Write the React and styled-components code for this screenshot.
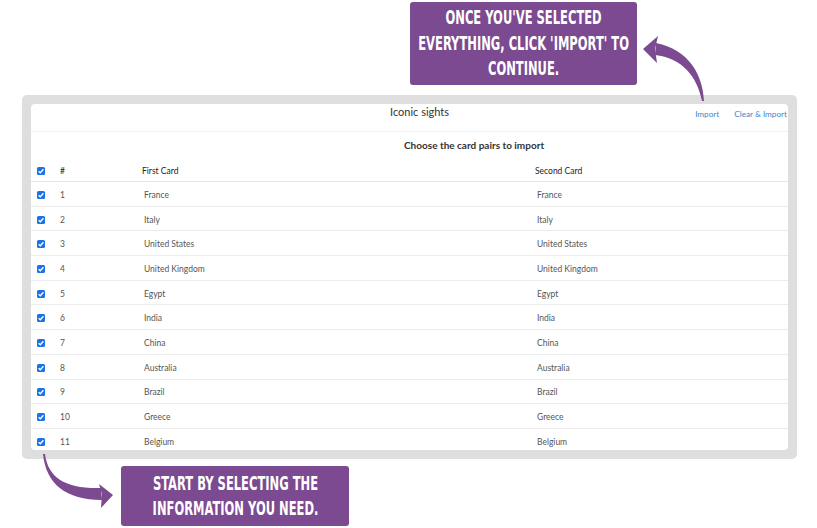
import React from "react";
import styled, { createGlobalStyle } from "styled-components";

const GlobalStyle = createGlobalStyle`
  html, body {
    margin: 0;
    padding: 0;
    background: #ffffff;
  }
  body {
    font-family: Lato, "Noto Sans", sans-serif;
  }
`;

const countries = [
  "France",
  "Italy",
  "United States",
  "United Kingdom",
  "Egypt",
  "India",
  "China",
  "Australia",
  "Brazil",
  "Greece",
  "Belgium",
];

function Checkbox() {
  return (
    <CheckBoxStyled>
      <svg width="8" height="8" viewBox="0 0 8 8">
        <path d="M1.6 4.2 L3.3 5.8 L6.4 2.3" fill="none" stroke="#fff" strokeWidth="1.3" />
      </svg>
    </CheckBoxStyled>
  );
}

// tapered curved arrows pointing from the panel to the callouts
function Arrows() {
  return (
    <ArrowLayer width="817" height="528" viewBox="0 0 817 528">
      <path
        d="M704 101 C 703 76 690 50 656 43 L 655 55 C 682 58 697 76 702 101 Z"
        fill="#7b4a90"
      />
      <polygon points="643,49 658,36 655,49 657,63" fill="#7b4a90" />
      <path
        d="M45 454 C 48 478 66 489 101 488 L 102 500 C 66 500 46 484 43 454 Z"
        fill="#7b4a90"
      />
      <polygon points="113,495 99,484 102,494 101,508" fill="#7b4a90" />
    </ArrowLayer>
  );
}

export default function App() {
  return (
    <>
      <GlobalStyle />
      <Page>
        <Callout $left={410} $width={227} $height={83}>
          <CalloutText>
            Once you've selected
            <br />
            everything, click 'import' to
            <br />
            continue.
          </CalloutText>
        </Callout>
        <Frame>
          <Panel>
            <TitleRow>
              <Title>Iconic sights</Title>
              <Links>
                <LinkText>Import</LinkText>
                <LinkText>Clear &amp; Import</LinkText>
              </Links>
            </TitleRow>
            <Subtitle>Choose the card pairs to import</Subtitle>
            <HeaderRow>
              <Cell $first>
                <Checkbox />
              </Cell>
              <Cell>#</Cell>
              <Cell>First Card</Cell>
              <Cell>Second Card</Cell>
            </HeaderRow>
            {countries.map((name, i) => (
              <Row key={name}>
                <Cell $first>
                  <Checkbox />
                </Cell>
                <Cell>{i + 1}</Cell>
                <Cell $shift>{name}</Cell>
                <Cell $shift>{name}</Cell>
              </Row>
            ))}
          </Panel>
        </Frame>
        <Callout $left={121} $width={228} $height={60} $top={7}>
          <CalloutText>
            Start by selecting the
            <br />
            information you need.
          </CalloutText>
        </Callout>
        <Arrows />
      </Page>
    </>
  );
}

const Page = styled.div`
  position: relative;
  width: 817px;
  height: 528px;
  padding-top: 2px;
  box-sizing: border-box;
  overflow: hidden;
`;

const Callout = styled.div`
  margin-left: ${(p) => p.$left}px;
  margin-top: ${(p) => p.$top || 0}px;
  width: ${(p) => p.$width}px;
  height: ${(p) => p.$height}px;
  box-sizing: border-box;
  background: #7b4a90;
  border-radius: 3px;
  display: flex;
  align-items: center;
  justify-content: center;
`;

const CalloutText = styled.span`
  display: inline-block;
  flex-shrink: 0;
  white-space: nowrap;
  text-align: center;
  color: #ffffff;
  font-family: "DejaVu Sans Condensed", "DejaVu Sans", sans-serif;
  font-weight: 700;
  font-size: 20px;
  line-height: 25.5px;
  text-transform: uppercase;
  transform: scaleX(0.64);
`;

const Frame = styled.div`
  margin: 10px 0 0 22px;
  width: 775px;
  padding: 9px;
  box-sizing: border-box;
  background: #dedede;
  border-radius: 5px;
`;

const Panel = styled.div`
  height: 346px;
  background: #ffffff;
  border-radius: 4px;
  overflow: hidden;
`;

const TitleRow = styled.div`
  display: flex;
  align-items: flex-start;
  height: 28px;
  box-sizing: border-box;
  padding: 1px 1px 0 359px;
  border-bottom: 1px solid #f2f2f2;
`;

const Title = styled.div`
  font-size: 11px;
  line-height: 14px;
  color: #333;
`;

const Links = styled.div`
  margin-left: auto;
  display: flex;
  gap: 15px;
  padding-top: 3px;
`;

const LinkText = styled.span`
  font-size: 8.2px;
  line-height: 12px;
  color: #3f86c9;
`;

const Subtitle = styled.div`
  height: 26px;
  padding-left: 373px;
  display: flex;
  align-items: center;
  font-size: 10px;
  font-weight: 700;
  color: #333;
`;

const Grid = styled.div`
  display: grid;
  grid-template-columns: 21px 82px 393px 1fr;
  align-items: center;
  box-sizing: border-box;
  padding-top: 2px;
`;

const HeaderRow = styled(Grid)`
  height: 24px;
  border-bottom: 1px solid #e6e6e6;
  font-size: 8.5px;
  color: #222;
`;

const Row = styled(Grid)`
  height: 24.7px;
  border-bottom: 1px solid #ececec;
  font-size: 8.5px;
  color: #555;
`;

const Cell = styled.div`
  padding-left: ${(p) => (p.$first ? 6 : p.$shift ? 10 : 8)}px;
  display: flex;
  align-items: center;
  white-space: nowrap;
`;

const CheckBoxStyled = styled.span`
  width: 8px;
  height: 8px;
  border-radius: 1.5px;
  background: #1a73e8;
  display: inline-flex;
  align-items: center;
  justify-content: center;
`;

const ArrowLayer = styled.svg`
  position: absolute;
  left: 0;
  top: 0;
  pointer-events: none;
`;
